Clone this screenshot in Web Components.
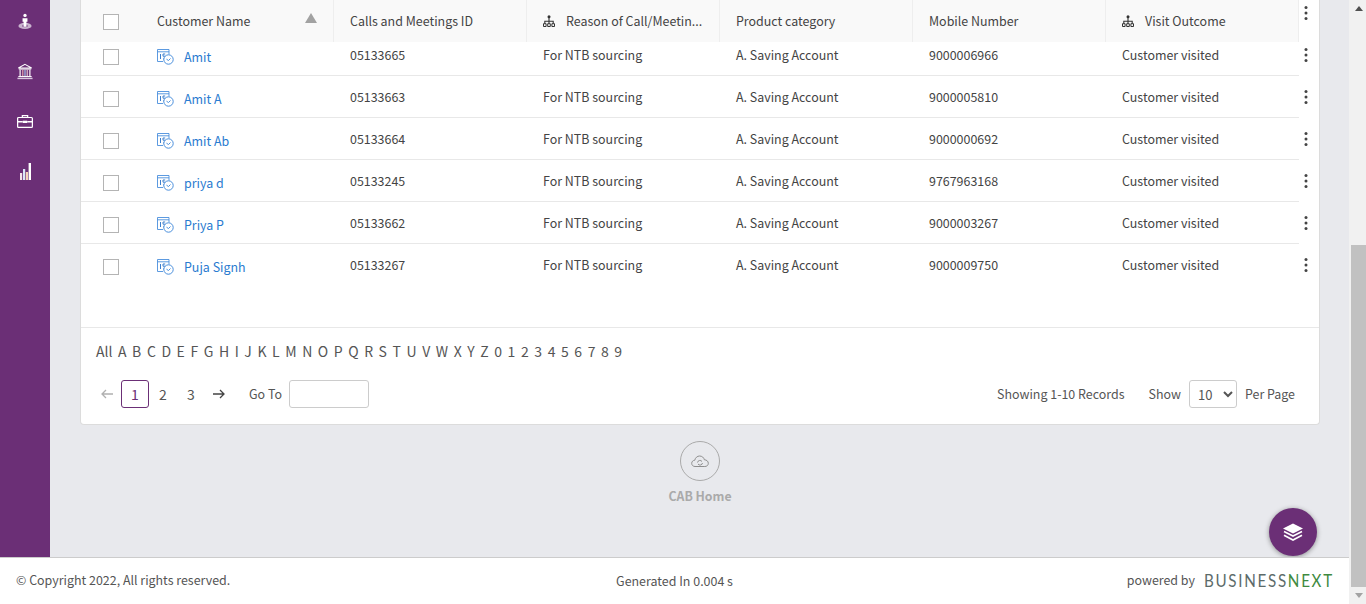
<!DOCTYPE html>
<html>
<head>
<meta charset="utf-8">
<title>Calls and Meetings</title>
<style>
  html, body { margin: 0; height: 100%; overflow: hidden; }
  body { font: 12.45px "Noto Sans CJK SC", "Noto Sans", sans-serif; color: #444; }
</style>
</head>
<body>
<crm-app>
  <crm-sidebar slot="side"></crm-sidebar>
  <crm-table></crm-table>
  <crm-pager></crm-pager>
  <crm-home-link slot="fab"></crm-home-link>
  <crm-fab slot="fab"></crm-fab>
  <crm-footer slot="foot"></crm-footer>
  <crm-scrollbar slot="bar"></crm-scrollbar>
</crm-app>

<script>
// helper, every element just sets its html in an open shadow root
class Base extends HTMLElement {
  constructor() {
    super();
    this.attachShadow({ mode: 'open' });
    this.shadowRoot.innerHTML = this.render();
  }
}

const PURPLE = '#6b2f76';

// tree icon of the header cells
const treeIcon = `<svg width="12" height="12" viewBox="0 0 12 12" fill="none" stroke="#333" stroke-width="1.100">
  <circle cx="6" cy="1.800" r="1.500" fill="#333" stroke="none"/>
  <path d="M6 3v3M1.800 8.500V6.200h8.400v2.300M6 6v2.500"/>
  <path d="M.5 8.700h2.600v2.800H.5zM4.700 8.700h2.600v2.800H4.700zM8.900 8.700h2.600v2.800H8.900z" stroke-width="1"/>
</svg>`;

// calendar and clock in front of the names
const visitIcon = `<svg width="17" height="16" viewBox="0 0 17 16" fill="none" stroke="#4a8fdc" stroke-width="1">
  <path d="M.5 12.500V.5h11.500v5M.5 12.500h5.500M.5 2.800h11.500" stroke-width=".9"/>
  <path d="M3.500 5v5M6 5H8.200M6 5v2.200h2.200v2.800H6" stroke="#3d7fcc"/>
  <circle cx="11.500" cy="10.500" r="4.700" fill="#fff"/>
  <path d="M9.500 10.200l2 1.300 2-2" />
</svg>`;

const kebab = `<svg width="4" height="16" viewBox="0 0 4 16" fill="#444">
  <circle cx="2" cy="2.500" r="1.500"/><circle cx="2" cy="8" r="1.500"/><circle cx="2" cy="13.500" r="1.500"/>
</svg>`;

class CrmApp extends Base {
  render() {
    return `<style>
      :host { display: flex; height: 604px; background: #fff; }
      .page { flex: 1; min-width: 0; display: flex; flex-direction: column; }
      .top { flex: 1; min-height: 0; display: flex; }
      .content {
        flex: 1; min-width: 0; position: relative; overflow: hidden;
        background: #e8e9ed; padding: 0 29px 0 30px;
      }
      .card {
        background: #fff; border: 1px solid #dcdcdc; border-top: 0;
        border-radius: 0 0 4px 4px;
      }
    </style>
    <div class="page">
      <div class="top">
        <slot name="side"></slot>
        <div class="content">
          <div class="card">
            <slot></slot>
          </div>
          <slot name="fab"></slot>
        </div>
      </div>
      <slot name="foot"></slot>
    </div>
    <slot name="bar"></slot>`;
  }
}

class CrmSidebar extends Base {
  render() {
    return `<style>
      :host { display: flex; flex-direction: column; align-items: center; width: 50px; flex: none; background: ${PURPLE}; }
      svg { display: block; flex: none; }
      .a { margin-top: 13px; }
      .b { margin-top: 33px; }
      .c { margin-top: 34px; }
      .d { margin-top: 34px; }
    </style>
    <svg class="a" width="14" height="17" viewBox="0 0 16 18">
      <ellipse cx="8" cy="14" rx="7.500" ry="3.600" fill="#c9b3ce"/>
      <ellipse cx="8" cy="14" rx="3.400" ry="1.600" fill="#8c5c96"/>
      <circle cx="8" cy="2" r="1.900" fill="#fff"/>
      <path d="M5.200 5.200h5.600v4.200H9.600V15H6.400V9.400H5.200z" fill="#fff"/>
    </svg>
    <svg class="b" width="16" height="17" viewBox="0 0 18 18" fill="none">
      <path d="M9 1 L16.500 5H1.500z" stroke="#fff" stroke-width="1.200"/>
      <path d="M2 6.200h14" stroke="#fff" stroke-width="1.300"/>
      <path d="M3.500 7v7" stroke="#fff" stroke-width="1.300"/>
      <path d="M6.500 7v7" stroke="#e6a6b0" stroke-width="1.300"/>
      <path d="M9 7v7" stroke="#a7c4ea" stroke-width="1.300"/>
      <path d="M11.500 7v7" stroke="#e8c3d0" stroke-width="1.300"/>
      <path d="M14.500 7v7" stroke="#fff" stroke-width="1.300"/>
      <path d="M1.500 14.700h15" stroke="#fff" stroke-width="1.200"/>
      <path d="M.5 16.800h17" stroke="#d8c6dc" stroke-width="1.600"/>
    </svg>
    <svg class="c" width="16" height="15" viewBox="0 0 18 15" fill="none" stroke="#fff">
      <path d="M6 3V1h6v2" stroke-width="1.400"/>
      <rect x=".7" y="3" width="16.600" height="11.200" rx="1" stroke-width="1.400"/>
      <path d="M1 7.800h5.500M11.500 7.800H17" stroke-width="1.600"/>
      <rect x="6.500" y="6.600" width="5" height="2.600" fill="#fff" stroke="none"/>
    </svg>
    <svg class="d" width="11" height="17" viewBox="0 0 11 17">
      <rect x="0" y="10" width="2.200" height="7" fill="#f6e4e9"/>
      <rect x="3" y="6" width="2.200" height="11" fill="#dbe8f8"/>
      <rect x="5.800" y="9" width="2.200" height="8" fill="#f6d4b8"/>
      <rect x="8.600" y="0" width="2.400" height="17" fill="#fff"/>
    </svg>`;
  }
}

class CrmCheck extends Base {
  render() {
    return `<style>
      :host { display: block; width: 16px; height: 16px; box-sizing: border-box; border: 1px solid #b4b4b4; background: #fff; }
    </style>`;
  }
}

class CrmHeaderCell extends Base {
  render() {
    const icon = this.hasAttribute('tree') ? `<span class="s">${treeIcon}</span>` : '';
    return `<style>
      :host {
        display: flex; align-items: center; gap: 11px; box-sizing: border-box;
        width: 193px; height: 42px; padding: 0 16px; flex: none;
        border-right: 1px solid #eee; color: #444; white-space: nowrap;
      }
      .s { display: flex; }
    </style>
    ${icon}<slot></slot>`;
  }
}

class CrmRow extends Base {
  render() {
    const d = this.dataset;
    const num = v => `<div class="cell">${v}</div>`;
    return `<style>
      :host { display: flex; height: 42px; overflow: hidden; color: #444; }
      :host([cut]) { height: 34px; }
      :host([cut]) .inner { margin-top: -8px; }
      .wrap { flex: 1; min-width: 0; }
      .inner { display: flex; height: 42px; box-sizing: border-box; border-bottom: 1px solid #e8e8e8; }
      :host([last]) .inner { border-bottom-color: transparent; }
      .chk { width: 60px; flex: none; padding: 15px 0 0 22px; box-sizing: border-box; }
      .name { width: 193px; flex: none; box-sizing: border-box; padding: 15px 0 0 16px; display: flex; gap: 10px; }
      .name svg { flex: none; }
      .name a { color: #2a7bd0; text-decoration: none; line-height: 19px; margin-top: -1px; }
      .cell { width: 193px; flex: none; box-sizing: border-box; padding-left: 16px; display: flex; align-items: center; height: 41px; }
      .act { width: 20px; flex: none; box-sizing: border-box; padding: 13px 0 0 5px; }
      .act-in { height: 16px; }
      :host([cut]) .act { padding-top: 5px; }
    </style>
    <div class="wrap"><div class="inner">
      <div class="chk"><crm-check></crm-check></div>
      <div class="name">${visitIcon}<a href="#">${d.name}</a></div>
      ${num(d.id)}${num('For NTB sourcing')}${num('A. Saving Account')}${num(d.mobile)}${num('Customer visited')}
    </div></div>
    <div class="act"><div class="act-in">${kebab}</div></div>`;
  }
}

class CrmTable extends Base {
  render() {
    const rows = [
      ['Amit', '05133665', '9000006966'],
      ['Amit A', '05133663', '9000005810'],
      ['Amit Ab', '05133664', '9000000692'],
      ['priya d', '05133245', '9767963168'],
      ['Priya P', '05133662', '9000003267'],
      ['Puja Signh', '05133267', '9000009750']
    ];
    const body = rows.map((r, i) =>
      `<crm-row ${i === 0 ? 'cut' : ''} ${i === 5 ? 'last' : ''} data-name="${r[0]}" data-id="${r[1]}" data-mobile="${r[2]}"></crm-row>`
    ).join('');
    return `<style>
      :host { display: block; padding-bottom: 41px; }
      .head { display: flex; height: 42px; }
      .cols { display: flex; background: #f9f9f9; }
      .chk { width: 60px; flex: none; box-sizing: border-box; padding: 14px 0 0 22px; }
      .sort { display: flex; width: 161px; }
      .tri { width: 0; height: 0; border: 6px solid transparent; border-top: 0; border-bottom: 10px solid #a2a2a2; margin: 1px 0 0 auto; }
      .act { flex: 1; box-sizing: border-box; padding: 5px 0 0 5px; }
      .act-in { height: 16px; }
    </style>
    <div class="head">
      <div class="cols">
        <div class="chk"><crm-check></crm-check></div>
        <crm-header-cell><span class="sort">Customer Name<span class="tri"></span></span></crm-header-cell>
        <crm-header-cell>Calls and Meetings ID</crm-header-cell>
        <crm-header-cell tree>Reason of Call/Meetin...</crm-header-cell>
        <crm-header-cell>Product category</crm-header-cell>
        <crm-header-cell>Mobile Number</crm-header-cell>
        <crm-header-cell tree>Visit Outcome</crm-header-cell>
      </div>
      <div class="act"><div class="act-in">${kebab}</div></div>
    </div>
    ${body}`;
  }
}

class CrmPager extends Base {
  render() {
    const letters = ['All', ...'ABCDEFGHIJKLMNOPQRSTUVWXYZ0123456789'];
    return `<style>
      :host { display: block; border-top: 1px solid #e8e8e8; padding: 14px 24px 16px 15px; color: #555; }
      .alpha { display: flex; gap: 5.570px; height: 17px; align-items: center; font-size: 14px; margin-bottom: 21px; }
      .bar { display: flex; align-items: center; height: 28px; margin-left: -3px; }
      .n { width: 28px; height: 28px; box-sizing: border-box; display: flex; align-items: center; justify-content: center; flex: none; font-size: 14px; }
      .cur { border: 1px solid ${PURPLE}; border-radius: 3px; color: ${PURPLE}; }
      .n svg { display: block; }
      .back { padding-right: 1px; }
      .go { margin-left: 16px; }
      input { width: 80px; height: 28px; box-sizing: border-box; margin: 0 0 0 7px; border: 1px solid #ccc; border-radius: 3px; outline: 0; padding: 0 6px; background: #fff; }
      .end { margin-left: auto; display: flex; align-items: center; }
      .show { margin-left: 24px; }
      select {
        width: 48px; height: 28px; box-sizing: border-box; margin: 0 8px; padding: 0 0 0 4px;
        border: 1px solid #ccc; border-radius: 3px; background: #fff; color: #555;
        font: 13px "Noto Sans CJK SC", "Noto Sans", sans-serif;
      }
    </style>
    <div class="alpha">${letters.map(l => `<span>${l}</span>`).join('')}</div>
    <div class="bar">
      <span class="n back"><svg width="12" height="10" viewBox="0 0 12 10" fill="none" stroke="#b0b0b0" stroke-width="1.300"><path d="M12 5H1M5 1 1 5l4 4"/></svg></span>
      <span class="n cur">1</span>
      <span class="n">2</span>
      <span class="n">3</span>
      <span class="n"><svg width="12" height="10" viewBox="0 0 12 10" fill="none" stroke="#444" stroke-width="1.300"><path d="M0 5h11M7 1l4 4-4 4"/></svg></span>
      <span class="go">Go To</span>
      <input type="text">
      <div class="end">
        <span>Showing 1-10 Records</span>
        <span class="show">Show</span>
        <select><option>10</option><option>25</option><option>50</option></select>
        <span>Per Page</span>
      </div>
    </div>`;
  }
}

class CrmHomeLink extends Base {
  render() {
    return `<style>
      :host { display: flex; flex-direction: column; align-items: center; margin-top: 16px; color: #aaa; }
      .c { width: 40px; height: 40px; box-sizing: border-box; border: 1px solid #aaa; border-radius: 50%; display: flex; align-items: center; justify-content: center; }
      .t { margin-top: 6px; font-weight: 700; font-size: 12.300px; line-height: 18px; }
    </style>
    <div class="c">
      <svg width="18" height="13" viewBox="0 0 18 13" fill="none" stroke="#8e8e8e" stroke-width="1">
        <path d="M4 11.500C2 11.500.7 10 .7 8.300S2 5.300 3.700 5.300C4.300 2.700 6.300 1 8.600 1c2.400 0 4.300 1.600 4.800 3.800 2.200 0 3.900 1.500 3.900 3.500s-1.500 3.200-3.500 3.200z"/>
        <path d="M6.500 7.500a2.500 2.500 0 0 1 4.500-1M11.500 8a2.500 2.500 0 0 1-4.500 1"/>
      </svg>
    </div>
    <div class="t">CAB Home</div>`;
  }
}

class CrmFab extends Base {
  render() {
    return `<style>
      :host {
        position: absolute; right: 32px; bottom: 1px; width: 48px; height: 48px; border-radius: 50%;
        background: ${PURPLE}; box-shadow: 0 1px 5px rgba(0,0,0,.4);
        display: flex; align-items: center; justify-content: center;
      }
    </style>
    <svg width="20" height="18" viewBox="0 0 20 18">
      <path d="M10 .5 20 5.500 10 10.500 0 5.500z" fill="#fff"/>
      <path d="M1 8.500l9 4.500 9-4.500M1 12.200l9 4.800 9-4.800" fill="none" stroke="#fff" stroke-width="1.600"/>
    </svg>`;
  }
}

class CrmFooter extends Base {
  render() {
    return `<style>
      :host {
        display: grid; grid-template-columns: 1fr auto 1fr; align-items: center; flex: none;
        height: 47px; box-sizing: border-box; border-top: 1px solid #ccc; background: #fff;
        padding: 0 16px; color: #555;
      }
      .left { margin-top: -3px; }
      .r { justify-self: end; display: flex; align-items: center; gap: 9px; margin-top: -3px; }
      .logo {
        display: inline-block; width: 129px; white-space: nowrap;
        font: 18px Lato, sans-serif; letter-spacing: 2px; color: #5c6b6a;
        transform: scaleX(.844); transform-origin: 0 50%;
      }
      .logo b { font-weight: 400; color: #3f8a3f; }
    </style>
    <div class="left">© Copyright 2022, All rights reserved.</div>
    <div>Generated In 0.004 s</div>
    <div class="r"><span>powered by</span><span class="logo">BUSINESS<b>NEXT</b></span></div>`;
  }
}

class CrmScrollbar extends Base {
  render() {
    return `<style>
      :host { display: flex; flex-direction: column; width: 17px; flex: none; background: #f1f1f1; box-sizing: border-box; padding-left: 2px; }
      .btn { height: 17px; display: flex; align-items: center; justify-content: center; flex: none; }
      .gap { height: 228px; flex: none; }
      .thumb { flex: 1; background: #c1c1c1; }
    </style>
    <div class="btn"><svg width="8" height="5" viewBox="0 0 8 5"><path d="M4 0 8 5H0z" fill="#505050"/></svg></div>
    <div class="gap"></div>
    <div class="thumb"></div>
    <div class="btn"><svg width="8" height="5" viewBox="0 0 8 5"><path d="M0 0H8L4 5z" fill="#a3a3a3"/></svg></div>`;
  }
}

customElements.define('crm-app', CrmApp);
customElements.define('crm-sidebar', CrmSidebar);
customElements.define('crm-check', CrmCheck);
customElements.define('crm-header-cell', CrmHeaderCell);
customElements.define('crm-row', CrmRow);
customElements.define('crm-table', CrmTable);
customElements.define('crm-pager', CrmPager);
customElements.define('crm-home-link', CrmHomeLink);
customElements.define('crm-fab', CrmFab);
customElements.define('crm-footer', CrmFooter);
customElements.define('crm-scrollbar', CrmScrollbar);
</script>
</body>
</html>
